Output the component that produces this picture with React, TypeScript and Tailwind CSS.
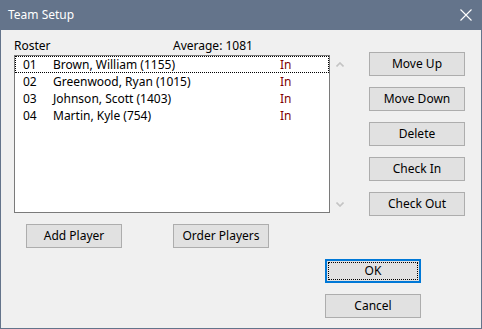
import React from 'react';

const players = [
  { num: '01', name: 'Brown, William (1155)', status: 'In' },
  { num: '02', name: 'Greenwood, Ryan (1015)', status: 'In' },
  { num: '03', name: 'Johnson, Scott (1403)', status: 'In' },
  { num: '04', name: 'Martin, Kyle (754)', status: 'In' },
];

const Btn = ({ label, focused = false }: { label: string; focused?: boolean }) => (
  <button
    className={
      focused
        ? 'w-[96px] h-[24px] bg-[#e1e1e1] border-2 border-[#0078d7] p-px text-[12px] leading-none text-black'
        : 'w-[96px] h-[24px] bg-[#e1e1e1] border border-[#adadad] text-[12px] leading-none text-black'
    }
  >
    {focused ? (
      <div className="w-full h-full border border-dotted border-black flex items-center justify-center">{label}</div>
    ) : (
      label
    )}
  </button>
);

export default function App() {
  return (
    <div
      className="w-[482px] h-[329px] flex flex-col bg-[#f0f0f0] border-x border-b border-[#64748b] text-[12px] leading-none text-black overflow-hidden"
      style={{ fontFamily: '"Noto Sans", "Liberation Sans", sans-serif' }}
    >
      {/* title bar */}
      <div className="h-[30px] shrink-0 bg-[#64748b] flex items-center justify-between pl-[7px] pr-[9px]">
        <span className="text-white text-[12px]">Team Setup</span>
        <svg width="12" height="12" viewBox="0 0 12 12">
          <path d="M0.5 0.5 L11.5 11.5 M11.5 0.5 L0.5 11.5" stroke="#ffffff" strokeWidth="1.1" />
        </svg>
      </div>

      <div className="flex flex-col pl-[13px] pt-[6px]">
        <div className="flex items-start">
          <div className="w-[316px] flex flex-col">
            <div className="h-[19px] flex items-center">
              <span className="w-[159px]">Roster</span>
              <span>Average: 1081</span>
            </div>
            <div className="h-[158px] bg-white border border-[#7a7a7a] flex flex-col">
              {players.map((p, i) => (
                <div
                  key={p.num}
                  className={
                    i === 0
                      ? 'h-[17px] flex items-center border border-dotted border-black'
                      : 'h-[17px] flex items-center border border-transparent'
                  }
                >
                  <span className="w-[37px] pl-[7px]">{p.num}</span>
                  <span className="w-[227px]">{p.name}</span>
                  <span className="text-[#800000]">{p.status}</span>
                </div>
              ))}
            </div>
          </div>

          <div className="w-[39px] h-[177px] pt-[26px] pb-[6px] pl-[6px] flex flex-col justify-between">
            <svg width="8" height="5" viewBox="0 0 8 5">
              <path d="M0.5 4.5 L4 1 L7.5 4.5" stroke="#c4c4c4" strokeWidth="1.6" fill="none" />
            </svg>
            <svg width="8" height="5" viewBox="0 0 8 5">
              <path d="M0.5 0.5 L4 4 L7.5 0.5" stroke="#c4c4c4" strokeWidth="1.6" fill="none" />
            </svg>
          </div>

          <div className="mt-[16px] flex flex-col gap-[11px]">
            <Btn label="Move Up" />
            <Btn label="Move Down" />
            <Btn label="Delete" />
            <Btn label="Check In" />
            <Btn label="Check Out" />
          </div>
        </div>

        <div className="flex gap-[51px] ml-[12px] mt-[8px]">
          <Btn label="Add Player" />
          <Btn label="Order Players" />
        </div>

        <div className="flex flex-col gap-[11px] ml-[311px] mt-[11px]">
          <Btn label="OK" focused />
          <Btn label="Cancel" />
        </div>
      </div>
    </div>
  );
}
